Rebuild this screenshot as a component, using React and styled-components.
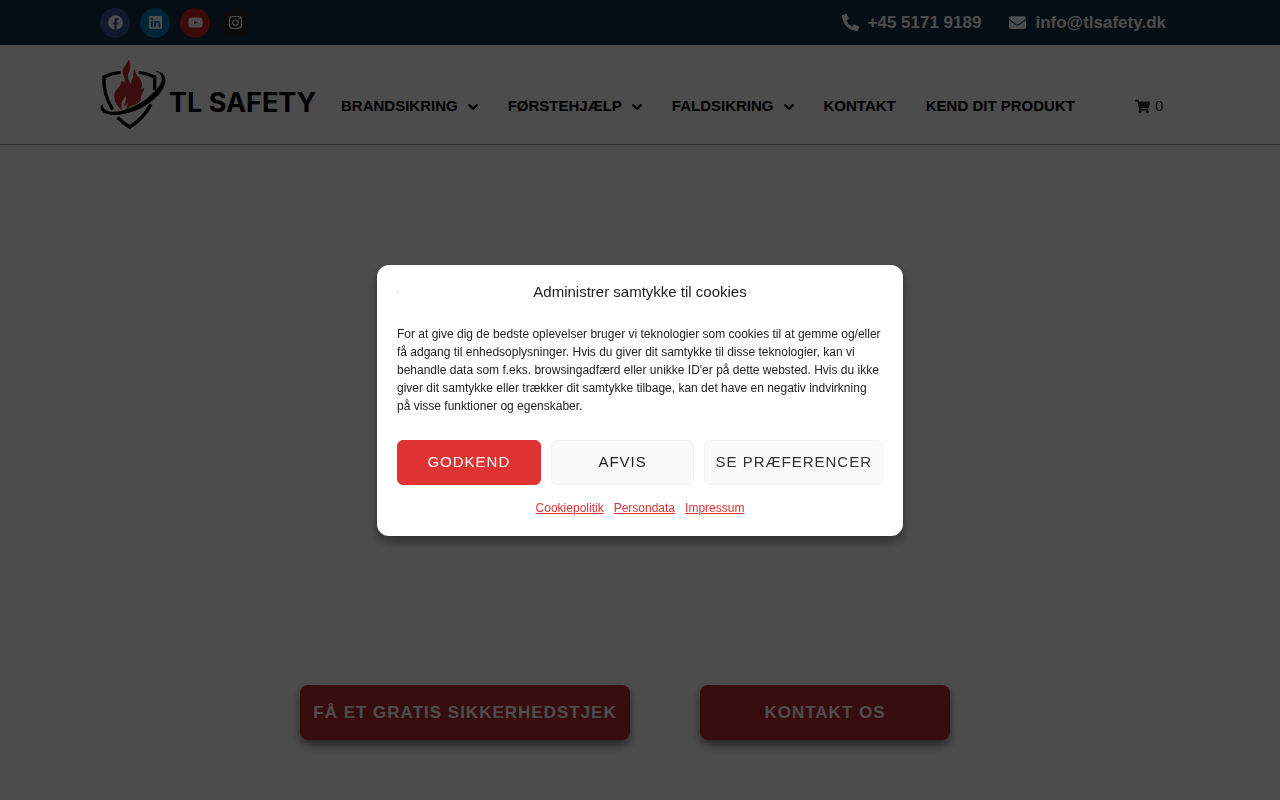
import React from "react";
import styled, { createGlobalStyle } from "styled-components";
import {
  FaFacebook,
  FaLinkedin,
  FaYoutube,
  FaInstagram,
  FaPhoneAlt,
  FaEnvelope,
  FaShoppingCart,
} from "react-icons/fa";

const GlobalStyle = createGlobalStyle`
  *, *::before, *::after { box-sizing: border-box; }
  body {
    margin: 0;
    background: #fff;
    color: #333;
    font-family: "Liberation Sans", Arial, sans-serif;
    font-size: 15px;
  }
`;

const Page = styled.div`
  min-height: 100vh;
  display: flex;
  flex-direction: column;
`;

const TopBar = styled.div`
  display: flex;
  justify-content: space-between;
  align-items: center;
  height: 45px;
  padding: 0 114px 0 100px;
  background: #122c49;
`;

const Row = styled.div`
  display: flex;
  gap: ${(p) => p.$gap}px;
`;

const SocialLink = styled.a`
  display: flex;
  align-items: center;
  justify-content: center;
  width: 30px;
  height: 30px;
  border-radius: 50%;
  background: ${(p) => p.$color};
  color: #fff;
  font-size: 15px;
`;

const ContactLink = styled.a`
  display: flex;
  align-items: center;
  gap: 9px;
  color: #fff;
  font-size: 17px;
  font-weight: 700;
  line-height: 20px;
  text-decoration: none;
`;

const Header = styled.header`
  display: flex;
  align-items: center;
  height: 100px;
  padding: 0 100px;
  border-bottom: 1px solid #a0a0a0;
`;

const Logo = styled.a`
  display: flex;
  align-items: center;
  gap: 3px;
  width: 216px;
  margin-right: 25px;
  color: #000;
  font-family: Inter, sans-serif;
  font-size: 27px;
  font-weight: 700;
  line-height: 32px;
  white-space: nowrap;
  text-decoration: none;
  svg { flex: none; }
`;

const LogoName = styled.span`
  padding-top: 16px;
`;

const Nav = styled.nav`
  display: flex;
  gap: 30px;
  padding-top: 22px;
`;

const NavLink = styled.a`
  display: flex;
  align-items: center;
  gap: 10px;
  color: #000;
  font-weight: 700;
  line-height: 20px;
  text-transform: uppercase;
  text-decoration: none;
  white-space: nowrap;
  svg { margin-top: 2px; }
`;

const CartLink = styled.a`
  display: flex;
  align-items: center;
  gap: 5px;
  margin-left: 60px;
  padding-top: 22px;
  color: #333;
  line-height: 20px;
  text-decoration: none;
  svg { margin-top: 2px; }
`;

const Hero = styled.main`
  flex: 1;
  display: flex;
  justify-content: center;
  align-items: flex-end;
  gap: 70px;
  padding: 0 30px 60px 0;
`;

const HeroLink = styled.a`
  display: flex;
  align-items: center;
  justify-content: center;
  width: ${(p) => p.$width}px;
  height: 55px;
  border-radius: 8px;
  background: #b92b2b;
  box-shadow: 0 5px 10px rgba(0, 0, 0, 0.5);
  color: #fff;
  font-size: 17px;
  font-weight: 700;
  letter-spacing: 1px;
  text-transform: uppercase;
  text-decoration: none;
`;

const Overlay = styled.div`
  position: fixed;
  inset: 0;
  display: flex;
  align-items: center;
  justify-content: center;
  background: rgba(0, 0, 0, 0.7);
`;

const Dialog = styled.section`
  width: 526px;
  max-width: 100%;
  padding: 17px 20px 19px;
  border-radius: 12px;
  background: #fff;
  box-shadow: 0 6px 12px rgba(0, 0, 0, 0.4);
  color: #222;
`;

const DialogHead = styled.div`
  display: grid;
  grid-template-columns: 100px 1fr 100px;
  align-items: center;
`;

const BrandDot = styled.span`
  width: 1px;
  height: 2px;
  background: #ddd;
`;

const DialogTitle = styled.h2`
  margin: 0;
  font-size: 15px;
  font-weight: 400;
  line-height: 20px;
  text-align: center;
`;

const DialogText = styled.p`
  margin: 23px 0 25px;
  font-size: 12px;
  line-height: 18px;
`;

const Actions = styled.div`
  display: grid;
  grid-template-columns: 1fr 1fr auto;
  gap: 10px;
`;

const ActionButton = styled.button`
  height: 45px;
  padding: 0 10px 2px;
  border: 1px solid ${(p) => (p.$primary ? "#df3333" : "#f2f2f2")};
  border-radius: 6px;
  background: ${(p) => (p.$primary ? "#df3333" : "#f9f9f9")};
  color: ${(p) => (p.$primary ? "#fff" : p.$soft ? "#333" : "#222")};
  font-family: inherit;
  font-size: 15px;
  letter-spacing: 1px;
  text-transform: uppercase;
  white-space: nowrap;
  cursor: pointer;
`;

const DialogLinks = styled.div`
  display: flex;
  justify-content: center;
  gap: 10px;
  margin-top: 14px;
`;

const DialogLink = styled.a`
  color: #df3333;
  font-size: 12px;
  line-height: 18px;
`;

const socials = [
  { label: "Facebook", color: "#3b5998", Icon: FaFacebook },
  { label: "LinkedIn", color: "#0077b5", Icon: FaLinkedin },
  { label: "YouTube", color: "#cd201f", Icon: FaYoutube },
  { label: "Instagram", color: "#262626", Icon: FaInstagram },
];

const navItems = [
  { label: "Brandsikring", menu: true },
  { label: "Førstehjælp", menu: true },
  { label: "Faldsikring", menu: true },
  { label: "Kontakt" },
  { label: "Kend dit produkt" },
];

function Chevron() {
  return (
    <svg width="10" height="10" viewBox="0 0 10 10" aria-hidden="true">
      <path
        d="M1.3 3.1 L5 6.8 L8.7 3.1"
        fill="none"
        stroke="currentColor"
        strokeWidth="2.3"
        strokeLinecap="round"
        strokeLinejoin="round"
      />
    </svg>
  );
}

function ShieldMark() {
  return (
    <svg width="66" height="70" viewBox="14 24 198 210" aria-hidden="true">
      <g fill="none" stroke="#000" strokeWidth="10">
        <path d="M76 61 Q46 64 26 75 Q22 124 52 173" />
        <path d="M130 61 Q156 64 178 75 L178 114" />
        <path d="M67 196 Q82 213 103 225 Q143 201 167 157" />
      </g>
      <path d="M179 57 C201 57 214 72 209 94 C202 127 158 163 115 178 C78 191 36 195 20 178 C13 170 14 160 24 157 C20 168 28 176 45 179 C80 182 128 163 163 132 C184 113 201 95 199 78 C198 67 190 61 179 57Z" />
      <path
        fill="#c42d30"
        d="M100 21 C96 36 83 44 82 58 C81 71 92 78 88 92 C84 89 83 86 78 86 C80 102 61 109 57 127 C54 146 66 163 80 174 C74 151 85 141 91 132 C94 148 86 153 86 165 C90 161 95 157 98 151 C98 160 92 164 94 172 C98 171 101 168 102 164 C110 162 131 155 136 145 C136 132 141 124 148 108 C143 108 140 110 137 113 C141 99 143 91 133 79 C126 72 119 64 119 50 C113 57 113 67 114 76 C109 83 106 88 108 98 C102 91 97 80 98 69 C100 60 112 46 100 21Z"
      />
    </svg>
  );
}

export default function App() {
  return (
    <>
      <GlobalStyle />
      <Page>
        <TopBar>
          <Row $gap={10}>
            {socials.map(({ label, color, Icon }) => (
              <SocialLink key={label} href="#" aria-label={label} $color={color}>
                <Icon />
              </SocialLink>
            ))}
          </Row>
          <Row $gap={28}>
            <ContactLink href="tel:+4551719189">
              <FaPhoneAlt />
              +45 5171 9189
            </ContactLink>
            <ContactLink href="mailto:info@tlsafety.dk">
              <FaEnvelope />
              info@tlsafety.dk
            </ContactLink>
          </Row>
        </TopBar>
        <Header>
          <Logo href="#">
            <ShieldMark />
            <LogoName>TL SAFETY</LogoName>
          </Logo>
          <Nav>
            {navItems.map(({ label, menu }) => (
              <NavLink key={label} href="#">
                {label}
                {menu && <Chevron />}
              </NavLink>
            ))}
          </Nav>
          <CartLink href="#" aria-label="Kurv">
            <FaShoppingCart />0
          </CartLink>
        </Header>
        <Hero>
          <HeroLink href="#" $width={330}>
            Få et gratis sikkerhedstjek
          </HeroLink>
          <HeroLink href="#" $width={250}>
            Kontakt os
          </HeroLink>
        </Hero>
      </Page>
      <Overlay>
        <Dialog role="dialog" aria-modal="true" aria-labelledby="consent-title">
          <DialogHead>
            <BrandDot />
            <DialogTitle id="consent-title">
              Administrer samtykke til cookies
            </DialogTitle>
          </DialogHead>
          <DialogText>
            For at give dig de bedste oplevelser bruger vi teknologier som
            cookies til at gemme og/eller få adgang til enhedsoplysninger. Hvis
            du giver dit samtykke til disse teknologier, kan vi behandle data
            som f.eks. browsingadfærd eller unikke ID'er på dette websted. Hvis
            du ikke giver dit samtykke eller trækker dit samtykke tilbage, kan
            det have en negativ indvirkning på visse funktioner og egenskaber.
          </DialogText>
          <Actions>
            <ActionButton type="button" $primary>
              Godkend
            </ActionButton>
            <ActionButton type="button">Afvis</ActionButton>
            <ActionButton type="button" $soft>
              Se præferencer
            </ActionButton>
          </Actions>
          <DialogLinks>
            <DialogLink href="#">Cookiepolitik</DialogLink>
            <DialogLink href="#">Persondata</DialogLink>
            <DialogLink href="#">Impressum</DialogLink>
          </DialogLinks>
        </Dialog>
      </Overlay>
    </>
  );
}
